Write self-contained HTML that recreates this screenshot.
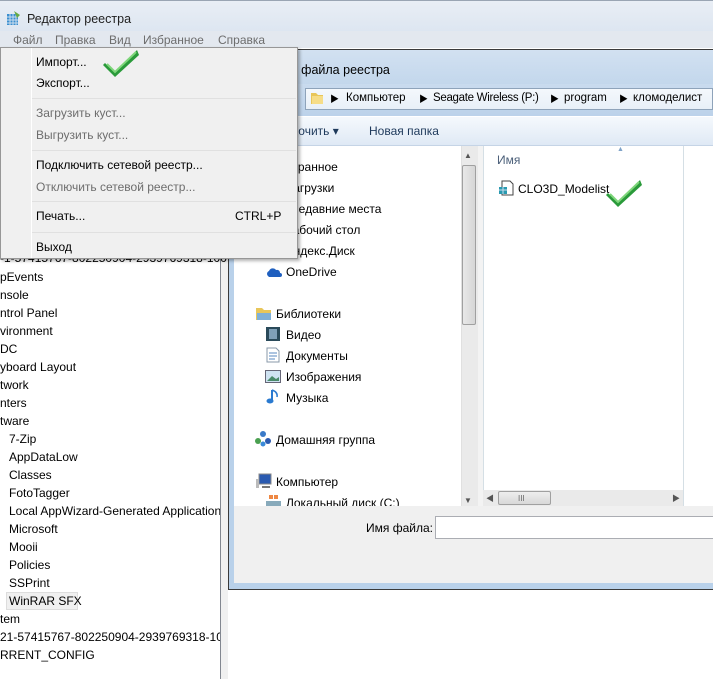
<!DOCTYPE html>
<html><head><meta charset="utf-8"><style>
*{margin:0;padding:0;box-sizing:border-box}
body{width:713px;height:679px;overflow:hidden;position:relative;background:#fff;font-family:"Liberation Sans","Noto Sans CJK SC",sans-serif;font-size:12px;color:#000}
.a{position:absolute;white-space:nowrap}
.t{position:absolute;white-space:nowrap;line-height:14px}
</style></head><body>
<!-- main title -->
<div class="a" style="left:0;top:0;width:713px;height:31px;background:linear-gradient(#e9eef5,#dde6f1);border-top:1px solid #9aa5b3"></div>
<svg class="a" style="left:6px;top:10px" width="16" height="16"><rect x="1" y="4" width="11" height="11" fill="#3a8fd0"/><path d="M1 7h11M1 10h11M1 13h11M4 4v11M7 4v11M10 4v11" stroke="#cde" stroke-width="1"/><path d="M8 1l6 4-3 3z" fill="#6a4"/></svg>
<div class="t" style="left:27px;top:12px;font-size:12.5px;color:#222">Редактор реестра</div>
<!-- menubar -->
<div class="a" style="left:0;top:31px;width:713px;height:17px;background:#e3e8ef"></div>
<div class="t" style="left:13px;top:33px;color:#6d6d6d">Файл</div>
<div class="t" style="left:55px;top:33px;color:#6d6d6d">Правка</div>
<div class="t" style="left:109px;top:33px;color:#6d6d6d">Вид</div>
<div class="t" style="left:143px;top:33px;color:#6d6d6d">Избранное</div>
<div class="t" style="left:218px;top:33px;color:#6d6d6d">Справка</div>
<!-- left tree pane -->
<div class="a" style="left:0;top:48px;width:221px;height:631px;background:#fff;border-right:1px solid #828790"></div>
<div class="a" style="left:221px;top:48px;width:7px;height:631px;background:#f0f0f0"></div>
<div class="t" style="left:0;top:251px">-1-57415767-802250904-2939769318-100</div>
<div class="t" style="left:0;top:270px">pEvents</div>
<div class="t" style="left:0;top:288px">nsole</div>
<div class="t" style="left:0;top:306px">ntrol Panel</div>
<div class="t" style="left:0;top:324px">vironment</div>
<div class="t" style="left:0;top:342px">DC</div>
<div class="t" style="left:0;top:360px">yboard Layout</div>
<div class="t" style="left:0;top:378px">twork</div>
<div class="t" style="left:0;top:396px">nters</div>
<div class="t" style="left:0;top:414px">tware</div>
<div class="t" style="left:9px;top:432px">7-Zip</div>
<div class="t" style="left:9px;top:450px">AppDataLow</div>
<div class="t" style="left:9px;top:468px">Classes</div>
<div class="t" style="left:9px;top:486px">FotoTagger</div>
<div class="t" style="left:9px;top:504px;width:211px;overflow:hidden">Local AppWizard-Generated Applications</div>
<div class="t" style="left:9px;top:522px">Microsoft</div>
<div class="t" style="left:9px;top:540px">Mooii</div>
<div class="t" style="left:9px;top:558px">Policies</div>
<div class="t" style="left:9px;top:576px">SSPrint</div>
<div class="a" style="left:6px;top:592px;width:72px;height:18px;background:#f0f0f0;border:1px solid #ddd"></div>
<div class="t" style="left:9px;top:594px">WinRAR SFX</div>
<div class="t" style="left:0;top:612px">tem</div>
<div class="t" style="left:0;top:630px;width:220px;overflow:hidden">21-57415767-802250904-2939769318-1004</div>
<div class="t" style="left:0;top:648px">RRENT_CONFIG</div>
<!-- dialog -->
<div class="a" style="left:228px;top:49px;width:490px;height:541px;background:#b9d1ea;border:1px solid #3a3a3a;border-right:none"></div>
<div class="a" style="left:229px;top:50px;width:484px;height:34px;background:linear-gradient(#d2e1f1,#c3d7ec)"></div>
<div class="t" style="left:254px;top:63px;font-size:12.5px">Импорт файла реестра</div>
<div class="a" style="left:234px;top:84px;width:479px;height:32px;background:linear-gradient(#c9dbee,#bcd2ea)"></div>
<div class="a" style="left:305px;top:88px;width:408px;height:22px;background:linear-gradient(#f4f8fc,#e8f0f8);border:1px solid #8ea3ba"></div>
<svg class="a" style="left:309px;top:90px" width="16" height="16"><path d="M2 3h5l2 2h5v9H2z" fill="#e8c65a"/><path d="M3 6h11v8H3z" fill="#f6dd88"/></svg>
<div class="t" style="left:330px;top:92px;font-size:9px">▶</div>
<div class="t" style="left:346px;top:91px;font-size:11.5px">Компьютер</div>
<div class="t" style="left:419px;top:92px;font-size:9px">▶</div>
<div class="t" style="left:433px;top:91px;font-size:11.5px;letter-spacing:-0.3px">Seagate Wireless (P:)</div>
<div class="t" style="left:550px;top:92px;font-size:9px">▶</div>
<div class="t" style="left:564px;top:91px;font-size:11.5px">program</div>
<div class="t" style="left:619px;top:92px;font-size:9px">▶</div>
<div class="t" style="left:633px;top:91px;font-size:11.5px">кломоделист</div>
<div class="a" style="left:234px;top:116px;width:479px;height:30px;background:linear-gradient(#f5f9fd,#dfe9f5);border-top:1px solid #fff;border-bottom:1px solid #c5d4e6"></div>
<div class="t" style="left:258px;top:124px;color:#1e395b">Упорядочить ▾</div>
<div class="t" style="left:369px;top:124px;color:#1e395b">Новая папка</div>
<div class="a" style="left:234px;top:146px;width:479px;height:360px;background:#fff"></div>
<!-- nav scrollbar -->
<div class="a" style="left:461px;top:146px;width:17px;height:360px;background:#eaeaea;border-left:1px solid #e0e0e0"></div>
<div class="t" style="left:464px;top:149px;font-size:8px;color:#555">▲</div>
<div class="a" style="left:462px;top:165px;width:14px;height:160px;background:linear-gradient(90deg,#e8e8e8,#d6d6d6);border:1px solid #a0a0a0;border-radius:2px"></div>
<div class="t" style="left:464px;top:494px;font-size:8px;color:#555">▼</div>
<div class="a" style="left:478px;top:146px;width:5px;height:360px;background:#f3f3f3"></div>
<!-- nav items -->
<div class="t" style="left:277px;top:160px">Избранное</div>
<div class="t" style="left:286px;top:181px">Загрузки</div>
<div class="t" style="left:290px;top:202px">Недавние места</div>
<div class="t" style="left:285px;top:223px">Рабочий стол</div>
<div class="t" style="left:285px;top:244px">Яндекс.Диск</div>
<svg class="a" style="left:266px;top:265px" width="16" height="14"><path d="M2 11a3 3 0 0 1 1-5 4 4 0 0 1 7-1 3 3 0 0 1 4 3 2 2 0 0 1 0 4H3z" fill="#1f5fbf"/></svg>
<div class="t" style="left:286px;top:265px">OneDrive</div>
<svg class="a" style="left:255px;top:305px" width="18" height="16"><path d="M1 3h6l2 2h7v10H1z" fill="#e8c65a"/><path d="M2 8h14v7H2z" fill="#7fb0d8"/></svg>
<div class="t" style="left:276px;top:307px">Библиотеки</div>
<svg class="a" style="left:266px;top:327px" width="14" height="14"><rect width="14" height="14" fill="#2a4a5a"/><rect x="3" y="2" width="8" height="10" fill="#7fa0b8"/></svg>
<div class="t" style="left:286px;top:328px">Видео</div>
<svg class="a" style="left:266px;top:347px" width="14" height="16"><path d="M1 1h9l3 3v11H1z" fill="#fff" stroke="#8899aa"/><path d="M3 6h8M3 9h8M3 12h6" stroke="#5a8ac0"/></svg>
<div class="t" style="left:286px;top:349px">Документы</div>
<svg class="a" style="left:265px;top:370px" width="16" height="13"><rect x=".5" y=".5" width="15" height="12" fill="#cfe3f2" stroke="#667"/><path d="M2 11l5-5 4 3 3-2v4z" fill="#4a8a6a"/></svg>
<div class="t" style="left:286px;top:370px">Изображения</div>
<svg class="a" style="left:266px;top:389px" width="14" height="16"><path d="M6 1v11" stroke="#2a7ad0" stroke-width="2"/><ellipse cx="4" cy="12" rx="3.5" ry="2.5" fill="#2a7ad0"/><path d="M6 1q6 2 5 7" stroke="#2a7ad0" fill="none" stroke-width="1.5"/></svg>
<div class="t" style="left:286px;top:391px">Музыка</div>
<svg class="a" style="left:255px;top:431px" width="17" height="16"><circle cx="8" cy="3" r="3" fill="#3a7ac8"/><circle cx="3" cy="10" r="3" fill="#4aa050"/><circle cx="13" cy="10" r="3" fill="#2a5ab0"/><circle cx="8" cy="13" r="2.5" fill="#3a8ad8"/></svg>
<div class="t" style="left:276px;top:433px">Домашняя группа</div>
<svg class="a" style="left:255px;top:473px" width="17" height="16"><rect x="4" y="1" width="12" height="10" fill="#2a5ab0" stroke="#888"/><rect x="1" y="6" width="3" height="9" fill="#bbb"/><path d="M7 14h8" stroke="#777" stroke-width="2"/></svg>
<div class="t" style="left:276px;top:475px">Компьютер</div>
<svg class="a" style="left:265px;top:493px" width="17" height="14"><rect x="1" y="8" width="15" height="5" fill="#8ab"/><path d="M4 2h4v4H4zM9 2h4v4H9z" fill="#e84"/></svg>
<div class="t" style="left:286px;top:496px">Локальный диск (C:)</div>
<!-- file list -->
<div class="a" style="left:483px;top:146px;width:1px;height:360px;background:#d5dfe5"></div>
<div class="a" style="left:683px;top:146px;width:1px;height:360px;background:#d5dfe5"></div>
<div class="t" style="left:497px;top:153px;color:#4c607a">Имя</div>
<div class="t" style="left:617px;top:143px;font-size:7px;color:#7fa3c8">▲</div>
<svg class="a" style="left:498px;top:180px" width="16" height="16"><path d="M4 1h8l3 3v11H4z" fill="#fff" stroke="#444"/><rect x="1" y="7" width="8" height="7" fill="#2a9ab0"/><path d="M1 10h8M5 7v7" stroke="#cde"/></svg>
<div class="t" style="left:518px;top:182px">CLO3D_Modelist</div>
<!-- horizontal scrollbar -->
<div class="a" style="left:483px;top:490px;width:200px;height:16px;background:#eaeaea"></div>
<div class="t" style="left:486px;top:492px;font-size:8px;color:#555">◀</div>
<div class="a" style="left:498px;top:491px;width:53px;height:14px;background:linear-gradient(#eee,#d8d8d8);border:1px solid #a0a0a0;border-radius:2px"></div>
<div class="t" style="left:518px;top:492px;font-size:8px;color:#666">III</div>
<div class="t" style="left:672px;top:492px;font-size:8px;color:#555">▶</div>
<!-- bottom -->
<div class="a" style="left:234px;top:506px;width:479px;height:77px;background:#f0f0f0"></div>
<div class="t" style="left:366px;top:521px">Имя файла:</div>
<div class="a" style="left:435px;top:516px;width:290px;height:23px;background:#fff;border:1px solid #abadb3"></div>
<svg class="a" style="left:606px;top:176px" width="38" height="34"><path d="M2 17l10 10L34 4l2 5-24 22L0 19z" fill="#2a9a3a"/><path d="M4 18l8 8L33 6" stroke="#7ed67a" stroke-width="2" fill="none"/></svg>
<!-- file menu -->
<div class="a" style="left:0;top:47px;width:298px;height:212px;background:#f0f0f0;border:1px solid #979797;box-shadow:2px 2px 3px rgba(0,0,0,.3)"></div>
<div class="a" style="left:31px;top:48px;width:1px;height:210px;background:#e2e3e3;border-right:1px solid #fff"></div>
<div class="t" style="left:36px;top:55px">Импорт...</div>
<div class="t" style="left:36px;top:76px">Экспорт...</div>
<div class="a" style="left:32px;top:98px;width:264px;height:1px;background:#e0e0e0"></div>
<div class="t" style="left:36px;top:106px;color:#6d6d6d">Загрузить куст...</div>
<div class="t" style="left:36px;top:128px;color:#6d6d6d">Выгрузить куст...</div>
<div class="a" style="left:32px;top:150px;width:264px;height:1px;background:#e0e0e0"></div>
<div class="t" style="left:36px;top:158px">Подключить сетевой реестр...</div>
<div class="t" style="left:36px;top:180px;color:#6d6d6d">Отключить сетевой реестр...</div>
<div class="a" style="left:32px;top:201px;width:264px;height:1px;background:#e0e0e0"></div>
<div class="t" style="left:36px;top:209px">Печать...</div>
<div class="t" style="left:235px;top:209px">CTRL+P</div>
<div class="a" style="left:32px;top:232px;width:264px;height:1px;background:#e0e0e0"></div>
<div class="t" style="left:36px;top:240px">Выход</div>
<svg class="a" style="left:103px;top:46px" width="38" height="34"><path d="M2 17l10 10L34 4l2 5-24 22L0 19z" fill="#2a9a3a"/><path d="M4 18l8 8L33 6" stroke="#7ed67a" stroke-width="2" fill="none"/></svg>
</body></html>
